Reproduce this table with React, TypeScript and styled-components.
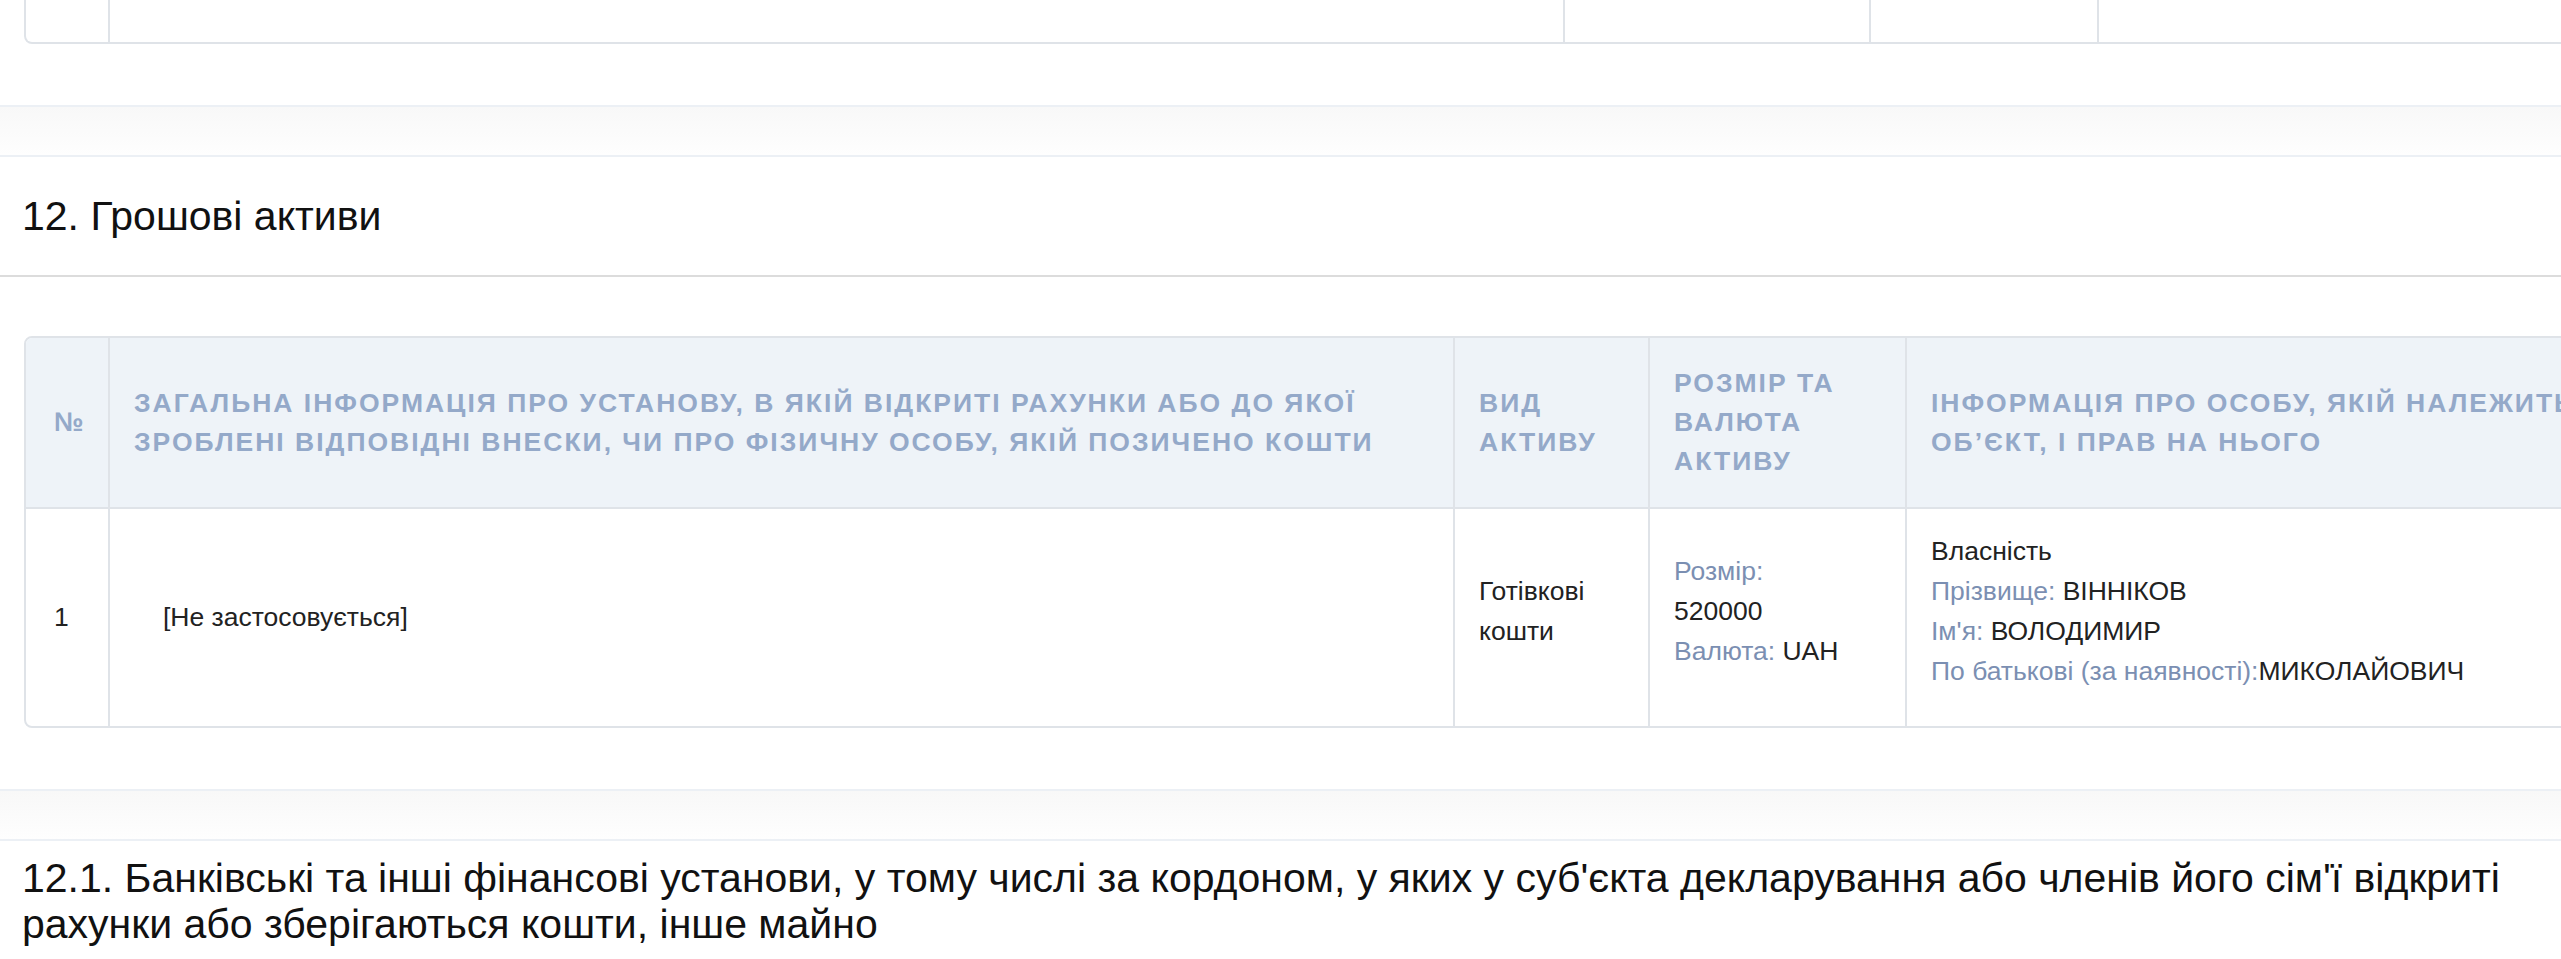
import React from "react";
import styled, { createGlobalStyle } from "styled-components";

const GlobalStyle = createGlobalStyle`
  *, *::before, *::after { box-sizing: border-box; }
  html, body { margin: 0; padding: 0; overflow: hidden; background: #ffffff; }
  body {
    font-family: "Liberation Sans", Arial, Helvetica, sans-serif;
    color: #222222;
  }
`;

const Page = styled.div`
  width: 2561px;
  display: flex;
  flex-direction: column;
`;

const TableWrap = styled.div<{ $top?: number }>`
  padding-left: 24px;
  margin-top: ${(p) => p.$top ?? 0}px;
`;

const Table = styled.table<{ $width: number; $tail?: boolean }>`
  width: ${(p) => p.$width}px;
  table-layout: fixed;
  border-collapse: separate;
  border-spacing: 0;
  border: 2px solid #dfe3e8;
  ${(p) => (p.$tail ? "border-top: none; border-radius: 0 0 8px 8px;" : "border-radius: 8px;")}
  font-size: 26.5px;
  line-height: 40px;
  color: #222222;
`;

const TailCell = styled.td<{ $w: number }>`
  width: ${(p) => p.$w}px;
  height: 42px;
  padding: 0;
  border-left: 2px solid #dfe3e8;
  &:first-child { border-left: none; }
`;

const Th = styled.th<{ $w: number }>`
  width: ${(p) => p.$w}px;
  padding: 26px 24px;
  background: #eef3f8;
  color: #94a9c9;
  font-weight: 700;
  font-size: 26.5px;
  line-height: 39px;
  letter-spacing: 2px;
  text-transform: uppercase;
  text-align: left;
  vertical-align: middle;
  border-left: 2px solid #dfe3e8;
  &:first-child {
    border-left: none;
    padding-left: 28px;
    border-top-left-radius: 6px;
  }
`;

const Td = styled.td<{ $lift?: boolean }>`
  padding: 22px 24px ${(p) => (p.$lift ? 35 : 23)}px;
  vertical-align: middle;
  border-top: 2px solid #dfe3e8;
  border-left: 2px solid #dfe3e8;
  &:first-child {
    border-left: none;
    padding-left: 28px;
  }
`;

const Indented = styled.span`
  padding-left: 29px;
`;

const Line = styled.div`
  display: block;
`;

const Label = styled.span`
  color: #7b8fb2;
`;

const Band = styled.div`
  margin-top: 61px;
  height: 52px;
  border-top: 2px solid #ecf0f5;
  border-bottom: 2px solid #ecf0f5;
  background: linear-gradient(to bottom, #f8f8f8, #fefefe);
`;

const SectionTitle = styled.h2<{ $compact?: boolean }>`
  margin: 0;
  font-size: 41px;
  line-height: 46px;
  font-weight: 400;
  color: #111111;
  padding: ${(p) => (p.$compact ? "14px 24px 20px 22px" : "36px 24px 36px 22px")};
  border-bottom: ${(p) => (p.$compact ? "none" : "2px solid #dcdcdc")};
`;

const tailWidths = [82, 1455, 306, 228, 700];
const cashWidths = [82, 1345, 195, 257, 750];
const sum = (a: number[]) => a.reduce((s, v) => s + v, 0) + 4;

export default function App() {
  return (
    <>
      <GlobalStyle />
      <Page>
        <TableWrap>
          <Table $width={sum(tailWidths)} $tail>
            <tbody>
              <tr>
                {tailWidths.map((w, i) => (
                  <TailCell key={i} $w={w} />
                ))}
              </tr>
            </tbody>
          </Table>
        </TableWrap>

        <Band />
        <SectionTitle>12. Грошові активи</SectionTitle>

        <TableWrap $top={59}>
          <Table $width={sum(cashWidths)}>
            <thead>
              <tr>
                <Th $w={cashWidths[0]}>№</Th>
                <Th $w={cashWidths[1]}>
                  Загальна інформація про установу, в якій відкриті рахунки або до якої
                  зроблені відповідні внески, чи про фізичну особу, якій позичено кошти
                </Th>
                <Th $w={cashWidths[2]}>Вид активу</Th>
                <Th $w={cashWidths[3]}>Розмір та валюта активу</Th>
                <Th $w={cashWidths[4]}>Інформація про особу, якій належить об’єкт, і прав на нього</Th>
              </tr>
            </thead>
            <tbody>
              <tr>
                <Td>1</Td>
                <Td>
                  <Indented>[Не застосовується]</Indented>
                </Td>
                <Td $lift>Готівкові кошти</Td>
                <Td $lift>
                  <Line>
                    <Label>Розмір:</Label>
                  </Line>
                  <Line>520000</Line>
                  <Line>
                    <Label>Валюта:</Label> UAH
                  </Line>
                </Td>
                <Td $lift>
                  <Line>Власність</Line>
                  <Line>
                    <Label>Прізвище:</Label> ВІННІКОВ
                  </Line>
                  <Line>
                    <Label>Ім'я:</Label> ВОЛОДИМИР
                  </Line>
                  <Line>
                    <Label>По батькові (за наявності):</Label>МИКОЛАЙОВИЧ
                  </Line>
                </Td>
              </tr>
            </tbody>
          </Table>
        </TableWrap>

        <Band />
        <SectionTitle $compact>
          12.1. Банківські та інші фінансові установи, у тому числі за кордоном, у яких у суб'єкта
          декларування або членів його сім'ї відкриті рахунки або зберігаються кошти, інше майно
        </SectionTitle>
      </Page>
    </>
  );
}
